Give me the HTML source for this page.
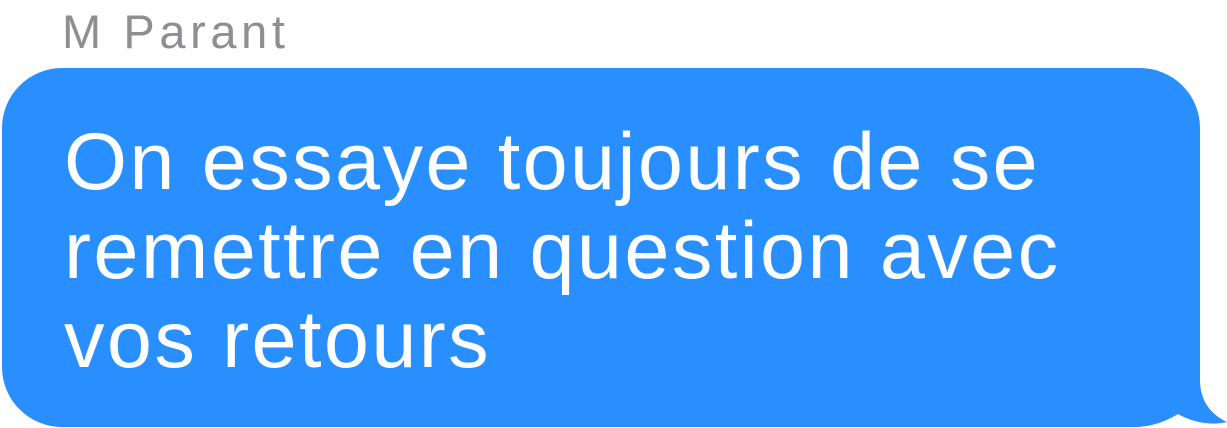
<!DOCTYPE html>
<html><head><meta charset="utf-8"><style>
html,body{margin:0;padding:0;background:#fff;width:1227px;height:428px;overflow:hidden;position:relative}
.name{position:absolute;left:62px;top:4px;font-family:"Liberation Sans",sans-serif;font-size:47px;letter-spacing:4.6px;color:#8e8e93;line-height:56px}
svg{position:absolute;left:0;top:0}
.msg{position:absolute;left:64px;top:118px;font-family:"Liberation Sans",sans-serif;font-size:81px;letter-spacing:2.4px;line-height:89px;color:#fff;white-space:nowrap}
</style></head><body>
<div class="name">M Parant</div>
<svg width="1227" height="428" viewBox="0 0 1227 428">
<path d="M62 68 H1140 A60 60 0 0 1 1200 128 V380 C1200 400 1210 414 1227 422 C1210 426 1192 422 1178 414 C1165 422 1150 427 1135 427 H62 A60 60 0 0 1 2 367 V128 A60 60 0 0 1 62 68 Z" fill="#2a8ffe"/>
</svg>
<div class="msg">On essaye toujours de se<br>remettre en question avec<br>vos retours</div>
</body></html>
